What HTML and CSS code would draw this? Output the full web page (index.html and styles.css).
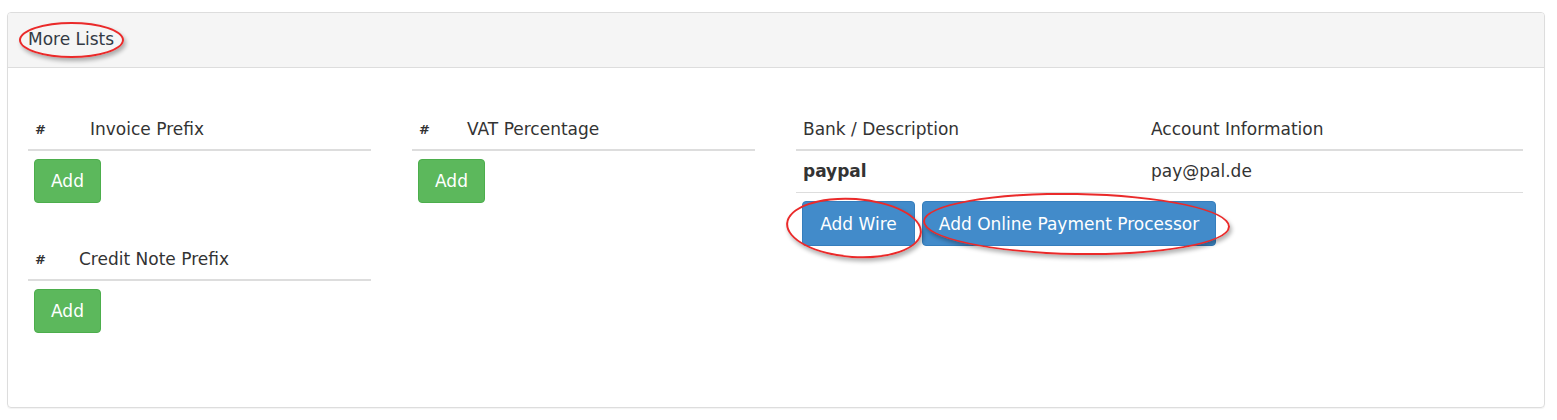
FILE: index.html
```html
<!DOCTYPE html>
<html>
<head>
<meta charset="utf-8">
<link rel="stylesheet" href="styles.css">
</head>
<body>
<div class="page">
  <div class="panel">
    <div class="panel-heading">More Lists</div>
    <div class="panel-body">
      <div class="col">
        <table class="tbl">
          <thead><tr><th class="hash">#</th><th>Invoice Prefix</th></tr></thead>
        </table>
        <button class="btn btn-green">Add</button>
        <table class="tbl tbl-second">
          <thead><tr><th class="hash hash-narrow">#</th><th>Credit Note Prefix</th></tr></thead>
        </table>
        <button class="btn btn-green">Add</button>
      </div>
      <div class="col">
        <table class="tbl">
          <thead><tr><th class="hash hash-mid">#</th><th>VAT Percentage</th></tr></thead>
        </table>
        <button class="btn btn-green">Add</button>
      </div>
      <div class="col">
        <table class="tbl">
          <thead><tr><th class="bank">Bank / Description</th><th>Account Information</th></tr></thead>
          <tbody><tr><td class="strong">paypal</td><td>pay@pal.de</td></tr></tbody>
        </table>
        <div class="btn-row">
          <button class="btn btn-blue btn-wire">Add Wire</button>
          <button class="btn btn-blue btn-online">Add Online Payment Processor</button>
        </div>
      </div>
    </div>
  </div>
  <div class="mark mark-title"></div>
  <div class="mark mark-wire"></div>
  <div class="mark mark-online"></div>
</div>
</body>
</html>
```
FILE: styles.css
```css
html, body {
  margin: 0;
  padding: 0;
  background: #ffffff;
}
.page {
  position: relative;
  width: 1557px;
  height: 420px;
  padding: 12px 0 0 7px;
  box-sizing: border-box;
  font-family: "DejaVu Sans", Verdana, sans-serif;
  color: #333333;
  font-size: 17px;
}
.panel {
  width: 1538px;
  height: 396px;
  box-sizing: border-box;
  border: 1px solid #dddddd;
  border-radius: 4px;
  box-shadow: 0 1px 1px rgba(0,0,0,0.05);
  overflow: hidden;
}
.panel-heading {
  height: 55px;
  box-sizing: border-box;
  background: #f5f5f5;
  border-bottom: 1px solid #dddddd;
  padding-left: 20px;
  line-height: 53px;
  font-size: 17px;
  color: #333a44;
}
.panel-body {
  display: grid;
  grid-template-columns: 343px 343px 727px;
  column-gap: 41px;
  padding: 42px 0 0 20px;
}
.col {
  display: flex;
  flex-direction: column;
  align-items: flex-start;
}
.tbl {
  width: 100%;
  table-layout: fixed;
  border-collapse: collapse;
  border-spacing: 0;
}
.tbl th {
  text-align: left;
  font-weight: normal;
  padding: 8px 7px;
  height: 23px;
  line-height: 23px;
  border-bottom: 2px solid #dddddd;
  font-size: 17px;
  white-space: nowrap;
}
.tbl th.hash {
  width: 41px;
  font-weight: bold;
  font-size: 13px;
}
.tbl th.hash-narrow {
  width: 30px;
}
.tbl th.hash-mid {
  width: 34px;
}
.tbl th.bank {
  width: 334px;
}
.tbl td {
  padding: 8px 7px;
  height: 25px;
  line-height: 25px;
  border-bottom: 1px solid #dddddd;
  font-size: 17px;
}
.tbl td.strong {
  font-weight: bold;
}
.tbl-second {
  margin-top: 37px;
}
.btn {
  font-family: "DejaVu Sans", Verdana, sans-serif;
  font-size: 17px;
  color: #ffffff;
  border-radius: 4px;
  border: 1px solid transparent;
  margin-top: 8px;
  margin-left: 6px;
  cursor: pointer;
  white-space: nowrap;
}
.btn-green {
  background: #5cb85c;
  border-color: #4cae4c;
  width: 67px;
  height: 44px;
  padding: 0;
}
.btn-row {
  display: flex;
  gap: 7px;
  margin-left: 6px;
}
.btn-row .btn {
  margin-left: 0;
}
.btn-blue {
  background: #428bca;
  border-color: #357ebd;
  height: 45px;
  padding: 0;
}
.btn-wire {
  width: 113px;
}
.btn-online {
  width: 294px;
}
.mark {
  position: absolute;
  border: 2px solid #ea2a2a;
  border-radius: 50%;
  box-shadow: 2px 3px 4px rgba(0,0,0,0.3);
  pointer-events: none;
}
.mark-title {
  left: 19px;
  top: 22px;
  width: 101px;
  height: 32px;
}
.mark-wire {
  left: 786px;
  top: 198px;
  width: 132px;
  height: 56px;
  transform: rotate(4deg);
}
.mark-online {
  left: 923px;
  top: 193px;
  width: 303px;
  height: 58px;
  transform: rotate(1deg);
}
```
